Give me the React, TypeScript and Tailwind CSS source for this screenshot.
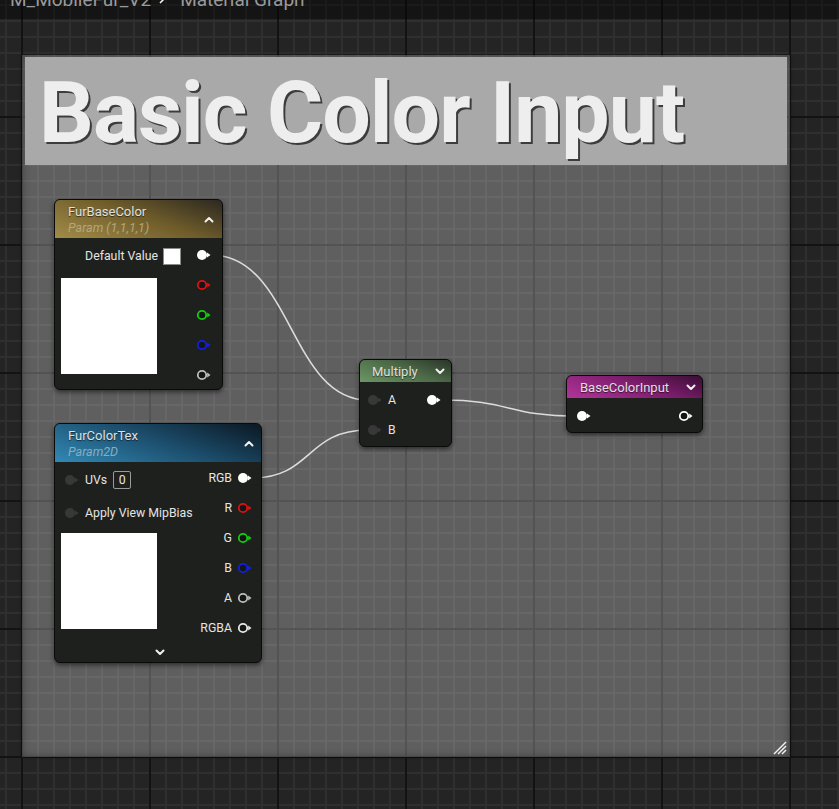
import React from "react";

const W = 839;
const H = 809;

function Grid() {
  const minorV: number[] = [];
  for (let x = 6; x < W; x += 16) minorV.push(x);
  const minorH: number[] = [];
  for (let y = 5; y < H; y += 16) minorH.push(y);
  const majorV: number[] = [];
  for (let x = 22; x < W; x += 128) majorV.push(x);
  const majorH: number[] = [];
  for (let y = 117 - 128; y < H; y += 128) majorH.push(y);
  return (
    <svg className="absolute inset-0" width={W} height={H}>
      <rect width={W} height={H} fill="#242424" />
      {minorV.map((x) => (
        <rect key={"mv" + x} x={x - 1} y={0} width={2} height={H} fill="#2f2f2f" />
      ))}
      {minorH.map((y) => (
        <rect key={"mh" + y} x={0} y={y - 1} width={W} height={2} fill="#2f2f2f" />
      ))}
      {majorV.map((x) => (
        <rect key={"Mv" + x} x={x - 1} y={0} width={2} height={H} fill="#131313" />
      ))}
      {majorH.map((y) => (
        <rect key={"Mh" + y} x={0} y={y - 1} width={W} height={2} fill="#131313" />
      ))}
    </svg>
  );
}

function FilledPin({ color }: { color: string }) {
  return (
    <svg width="16" height="12" viewBox="0 0 16 12" className="shrink-0">
      <circle cx="6" cy="6" r="5" fill={color} />
      <polygon points="11,3.5 14.5,6 11,8.5" fill={color} />
    </svg>
  );
}

function RingPin({ color }: { color: string }) {
  return (
    <svg width="16" height="12" viewBox="0 0 16 12" className="shrink-0">
      <circle cx="6" cy="6" r="4.2" fill="#151515" stroke={color} strokeWidth="1.8" />
      <polygon points="11.2,3.5 14.5,6 11.2,8.5" fill={color} />
    </svg>
  );
}

function DarkPin() {
  return (
    <svg width="16" height="12" viewBox="0 0 16 12" className="shrink-0">
      <circle cx="6" cy="6" r="5" fill="#383838" />
      <polygon points="11,3.5 14.5,6 11,8.5" fill="#383838" />
    </svg>
  );
}

function Chevron({ up }: { up?: boolean }) {
  return (
    <svg width="10" height="7" viewBox="0 0 10 7" className="shrink-0">
      <polyline
        points={up ? "1.5,5.5 5,2 8.5,5.5" : "1.5,1.5 5,5 8.5,1.5"}
        fill="none"
        stroke="#f0f0f0"
        strokeWidth="2"
        strokeLinecap="round"
        strokeLinejoin="round"
      />
    </svg>
  );
}

function Wires() {
  return (
    <svg className="absolute inset-0 pointer-events-none" width={W} height={H}>
      <g fill="none" stroke="#dcdcdc" strokeWidth="1.6">
        <path d="M 211 255 C 292 255, 290 400, 368 400" />
        <path d="M 252 478 C 312 478, 306 430, 368 430" />
        <path d="M 441 400 C 512 400, 505 416, 578 416" />
      </g>
    </svg>
  );
}

const nodeBase =
  "absolute rounded-[6px] border border-[#0a0a0a] bg-[#1e201e] overflow-hidden shadow-[0_2px_5px_rgba(0,0,0,0.55)] text-[12.3px] text-[#e4e4e4]";

const titleCls = "text-[13px] leading-[15px] text-[#e0e0e0] [text-shadow:0_1px_1px_rgba(0,0,0,0.6)] whitespace-nowrap";

function FurBaseColor() {
  return (
    <div className={nodeBase + " left-[54px] top-[199px] w-[169px] h-[191px] flex flex-col"}>
      <div className="h-[38px] shrink-0 flex items-center justify-between pl-[13px] pr-[8px] bg-[linear-gradient(200deg,#2c2820_0%,#6e5c2a_45%,#a38c48_100%)]">
        <div className="flex flex-col pt-[2px]">
          <span className={titleCls}>FurBaseColor</span>
          <span className="text-[12.5px] leading-[17px] italic text-[#b5a67c]">Param (1,1,1,1)</span>
        </div>
        <Chevron up />
      </div>
      <div className="flex flex-1">
        <div className="w-[126px] pl-[6px] flex flex-col">
          <div className="mt-[3px] h-[30px] flex items-center justify-end">
            <span>Default Value</span>
            <div className="ml-[5px] w-[18px] h-[17px] bg-white border border-[#8a8a8a]" />
          </div>
          <div className="mt-[7px] w-[96px] h-[96px] bg-white" />
        </div>
        <div className="flex-1 flex flex-col items-end pr-[10px] pt-[2px]">
          <div className="h-[30px] flex items-center"><FilledPin color="#ffffff" /></div>
          <div className="h-[30px] flex items-center"><RingPin color="#e01010" /></div>
          <div className="h-[30px] flex items-center"><RingPin color="#10d010" /></div>
          <div className="h-[30px] flex items-center"><RingPin color="#1020e8" /></div>
          <div className="h-[30px] flex items-center"><RingPin color="#bdbdbd" /></div>
        </div>
      </div>
    </div>
  );
}

function OutRow({ label, pin }: { label: string; pin: React.ReactNode }) {
  return (
    <div className="h-[30px] flex items-center">
      <span className="mr-[5px]">{label}</span>
      {pin}
    </div>
  );
}

function FurColorTex() {
  return (
    <div className={nodeBase + " left-[54px] top-[423px] w-[208px] h-[240px] flex flex-col"}>
      <div className="h-[38px] shrink-0 flex items-center justify-between pl-[13px] pr-[7px] bg-[linear-gradient(200deg,#0b1822_0%,#1b4a68_45%,#3189b6_100%)]">
        <div className="flex flex-col pt-[2px]">
          <span className={titleCls}>FurColorTex</span>
          <span className="text-[12.5px] leading-[17px] italic text-[#86aebf]">Param2D</span>
        </div>
        <Chevron up />
      </div>
      <div className="flex">
        <div className="w-[130px] pl-[6px] flex flex-col">
          <div className="mt-[3px] h-[30px] flex items-center pl-[3px]">
            <DarkPin />
            <span className="ml-[5px]">UVs</span>
            <div className="ml-[6px] w-[18px] h-[18px] border border-[#9a9a9a] rounded-[2px] flex items-center justify-center leading-none">0</div>
          </div>
          <div className="mt-[3px] h-[30px] flex items-center pl-[3px]">
            <DarkPin />
            <span className="ml-[5px] whitespace-nowrap">Apply View MipBias</span>
          </div>
          <div className="mt-[5px] w-[96px] h-[96px] bg-white" />
        </div>
        <div className="flex-1 flex flex-col items-end pr-[8px] pt-[1px]">
          <OutRow label="RGB" pin={<FilledPin color="#ffffff" />} />
          <OutRow label="R" pin={<RingPin color="#e01010" />} />
          <OutRow label="G" pin={<RingPin color="#10d010" />} />
          <OutRow label="B" pin={<RingPin color="#1020e8" />} />
          <OutRow label="A" pin={<RingPin color="#bdbdbd" />} />
          <OutRow label="RGBA" pin={<RingPin color="#e8e8e8" />} />
        </div>
      </div>
      <div className="h-[20px] flex items-center justify-center pl-[4px]">
        <Chevron />
      </div>
    </div>
  );
}

function Multiply() {
  return (
    <div className={nodeBase + " left-[359px] top-[359px] w-[93px] h-[88px] flex flex-col"}>
      <div className="h-[22px] shrink-0 flex items-center justify-between pl-[12px] pr-[6px] bg-[linear-gradient(200deg,#2a3528_0%,#4b6847_45%,#6c9764_100%)]">
        <span className={titleCls}>Multiply</span>
        <Chevron />
      </div>
      <div className="flex pt-[3px]">
        <div className="flex flex-col pl-[7px]">
          <div className="h-[30px] flex items-center">
            <DarkPin />
            <span className="ml-[5px]">A</span>
          </div>
          <div className="h-[30px] flex items-center">
            <DarkPin />
            <span className="ml-[5px]">B</span>
          </div>
        </div>
        <div className="flex-1 flex flex-col items-end pr-[9px]">
          <div className="h-[30px] flex items-center"><FilledPin color="#ffffff" /></div>
        </div>
      </div>
    </div>
  );
}

function BaseColorInput() {
  return (
    <div className={nodeBase + " left-[566px] top-[375px] w-[137px] h-[58px] flex flex-col"}>
      <div className="h-[22px] shrink-0 flex items-center justify-between pl-[13px] pr-[6px] bg-[linear-gradient(200deg,#3a0e35_0%,#7e1d6e_45%,#b13599_100%)]">
        <span className={titleCls}>BaseColorInput</span>
        <Chevron />
      </div>
      <div className="flex items-center justify-between pt-[3px] pl-[9px] pr-[8px]">
        <div className="h-[30px] flex items-center"><FilledPin color="#ffffff" /></div>
        <div className="h-[30px] flex items-center"><RingPin color="#ffffff" /></div>
      </div>
    </div>
  );
}

function Comment() {
  return (
    <div className="absolute left-[22px] top-[55px] w-[768px] h-[702px] bg-white/[0.27] shadow-[inset_0_0_8px_rgba(0,0,0,0.35),0_0_3px_rgba(0,0,0,0.6)] flex flex-col px-[3px] pt-[2px]">
      <div className="h-[108px] shrink-0 bg-[#a9a9a9] pl-[14px] pt-[12px]">
        <div className="text-[86px] leading-[87px] tracking-[-1px] font-bold text-[#eeeeee] [text-shadow:2px_2px_0_#3c3c3c] whitespace-nowrap">
          Basic Color Input
        </div>
      </div>
      <div className="flex-1" />
      <svg className="absolute right-[3px] bottom-[2px]" width="14" height="14" viewBox="0 0 14 14">
        <g stroke="#f2f2f2" strokeWidth="1.5">
          <line x1="1" y1="13" x2="13" y2="1" />
          <line x1="5" y1="13" x2="13" y2="5" />
          <line x1="9" y1="13" x2="13" y2="9" />
        </g>
      </svg>
    </div>
  );
}

function Breadcrumb() {
  return (
    <>
      <div className="absolute left-0 top-0 w-full h-[19px] bg-black/[0.42]" />
      <div className="absolute left-[10px] top-[-10px] flex items-center text-[19px] leading-[20px] text-[#9a9a9a] whitespace-nowrap">
        <span>M_MobileFur_V2</span>
        <svg width="10" height="16" viewBox="0 0 10 16" className="ml-[7px] mr-[12px] mt-[-4px]">
          <polyline points="2,1 8,7 2,13" fill="none" stroke="#f0f0f0" strokeWidth="1.6" />
        </svg>
        <span>Material Graph</span>
      </div>
    </>
  );
}

export default function App() {
  return (
    <div className="relative w-[839px] h-[809px] overflow-hidden bg-[#242424] [font-family:Roboto,'Liberation_Sans',sans-serif]">
      <Grid />
      <Comment />
      <Wires />
      <FurBaseColor />
      <FurColorTex />
      <Multiply />
      <BaseColorInput />
      <Breadcrumb />
    </div>
  );
}
